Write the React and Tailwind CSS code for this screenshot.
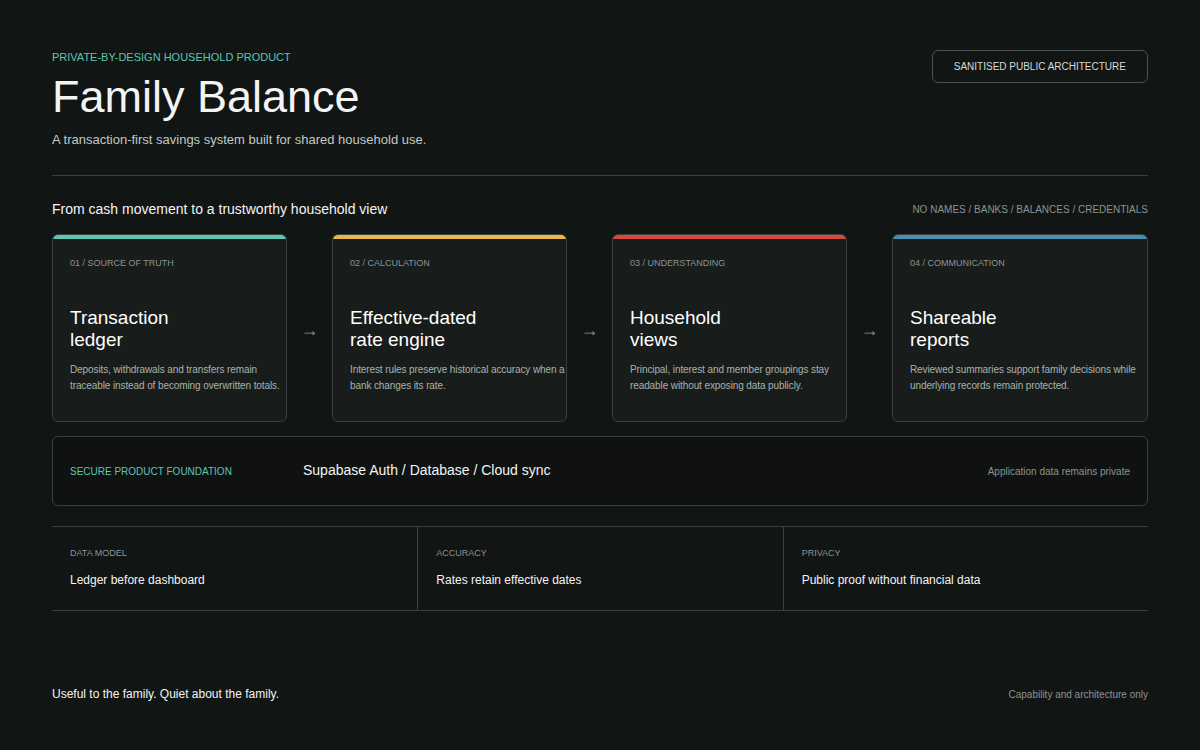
const cards = [
  { n: '01 / SOURCE OF TRUTH', t: ['Transaction', 'ledger'], d: 'Deposits, withdrawals and transfers remain traceable instead of becoming overwritten totals.', c: 'bg-[#5fc4b3]' },
  { n: '02 / CALCULATION', t: ['Effective-dated', 'rate engine'], d: 'Interest rules preserve historical accuracy when a bank changes its rate.', c: 'bg-[#e9b84a]' },
  { n: '03 / UNDERSTANDING', t: ['Household', 'views'], d: 'Principal, interest and member groupings stay readable without exposing data publicly.', c: 'bg-[#d9493b]' },
  { n: '04 / COMMUNICATION', t: ['Shareable', 'reports'], d: 'Reviewed summaries support family decisions while underlying records remain protected.', c: 'bg-[#4a8db5]' },
];

const stats = [
  ['DATA MODEL', 'Ledger before dashboard'],
  ['ACCURACY', 'Rates retain effective dates'],
  ['PRIVACY', 'Public proof without financial data'],
];

function Card({ card }) {
  return (
    <div className="h-[188px] rounded-md border border-[#3a423f] bg-[#181d1b] overflow-hidden flex flex-col">
      <div className={`h-[4px] ${card.c}`}></div>
      <div className="pl-[17px] pr-[1px] pt-[18px] flex flex-col flex-1">
        <div className="text-[9px] text-[#8b948f]">{card.n}</div>
        <div className="mt-[36px] text-[19px] leading-[22px] text-white">{card.t[0]}<br />{card.t[1]}</div>
        <div className="mt-[11px] text-[10px] leading-[16px] text-[#aab2ad] tracking-[-0.1px]">{card.d}</div>
      </div>
    </div>
  );
}

export default function App() {
  return (
    <div className="w-[1200px] h-[750px] bg-[#111514] px-[52px] pt-[48px] text-white flex flex-col" style={{ fontFamily: '"Liberation Sans", Arial, sans-serif' }}>
      <div className="flex justify-between items-start">
        <div>
          <div className="text-[11px] text-[#5fc4b3] mt-[1px]">PRIVATE-BY-DESIGN HOUSEHOLD PRODUCT</div>
          <div className="text-[45px] leading-[52px] mt-[5px] text-[#f3f4f3]">Family Balance</div>
          <div className="text-[13px] text-[#c3c9c5] mt-[7px]">A transaction-first savings system built for shared household use.</div>
        </div>
        <div className="h-[33px] mt-[2px] px-[21px] rounded-md border border-[#4a524f] text-[10px] text-[#d6dbd8] flex items-center">SANITISED PUBLIC ARCHITECTURE</div>
      </div>
      <div className="h-px bg-[#3a423f] mt-[26px]"></div>
      <div className="flex justify-between items-center mt-[23px]">
        <div className="text-[14px] text-[#f3f4f3]">From cash movement to a trustworthy household view</div>
        <div className="text-[10px] text-[#8b948f]">NO NAMES / BANKS / BALANCES / CREDENTIALS</div>
      </div>
      <div className="grid grid-cols-[235px_45px_235px_45px_235px_45px_1fr] mt-[14px] items-center">
        {cards.map((c, i) => (
          <>
            {i > 0 && <div key={'a' + i} className="text-center text-[#8b948f] text-[18px] pt-[4px]">→</div>}
            <Card key={i} card={c} />
          </>
        ))}
      </div>
      <div className="mt-[14px] h-[70px] rounded-md border border-[#3a423f] bg-[#0f1211] flex items-center px-[17px]">
        <div className="text-[10px] text-[#5fc4b3] w-[233px]">SECURE PRODUCT FOUNDATION</div>
        <div className="text-[14px] text-[#f3f4f3] mb-[2px]">Supabase Auth / Database / Cloud sync</div>
        <div className="ml-auto text-[10px] text-[#8b948f]">Application data remains private</div>
      </div>
      <div className="mt-[20px] border-t border-b border-[#3a423f] grid grid-cols-3 h-[85px]">
        {stats.map((s, i) => (
          <div key={i} className={`px-[18px] pt-[20px] ${i > 0 ? 'border-l border-[#3a423f]' : ''}`}>
            <div className="text-[9px] text-[#8b948f]">{s[0]}</div>
            <div className="text-[12px] text-[#f3f4f3] mt-[10px]">{s[1]}</div>
          </div>
        ))}
      </div>
      <div className="flex justify-between items-center mt-[74px]">
        <div className="text-[12px] text-[#f3f4f3]">Useful to the family. Quiet about the family.</div>
        <div className="text-[10px] text-[#8b948f]">Capability and architecture only</div>
      </div>
    </div>
  );
}
